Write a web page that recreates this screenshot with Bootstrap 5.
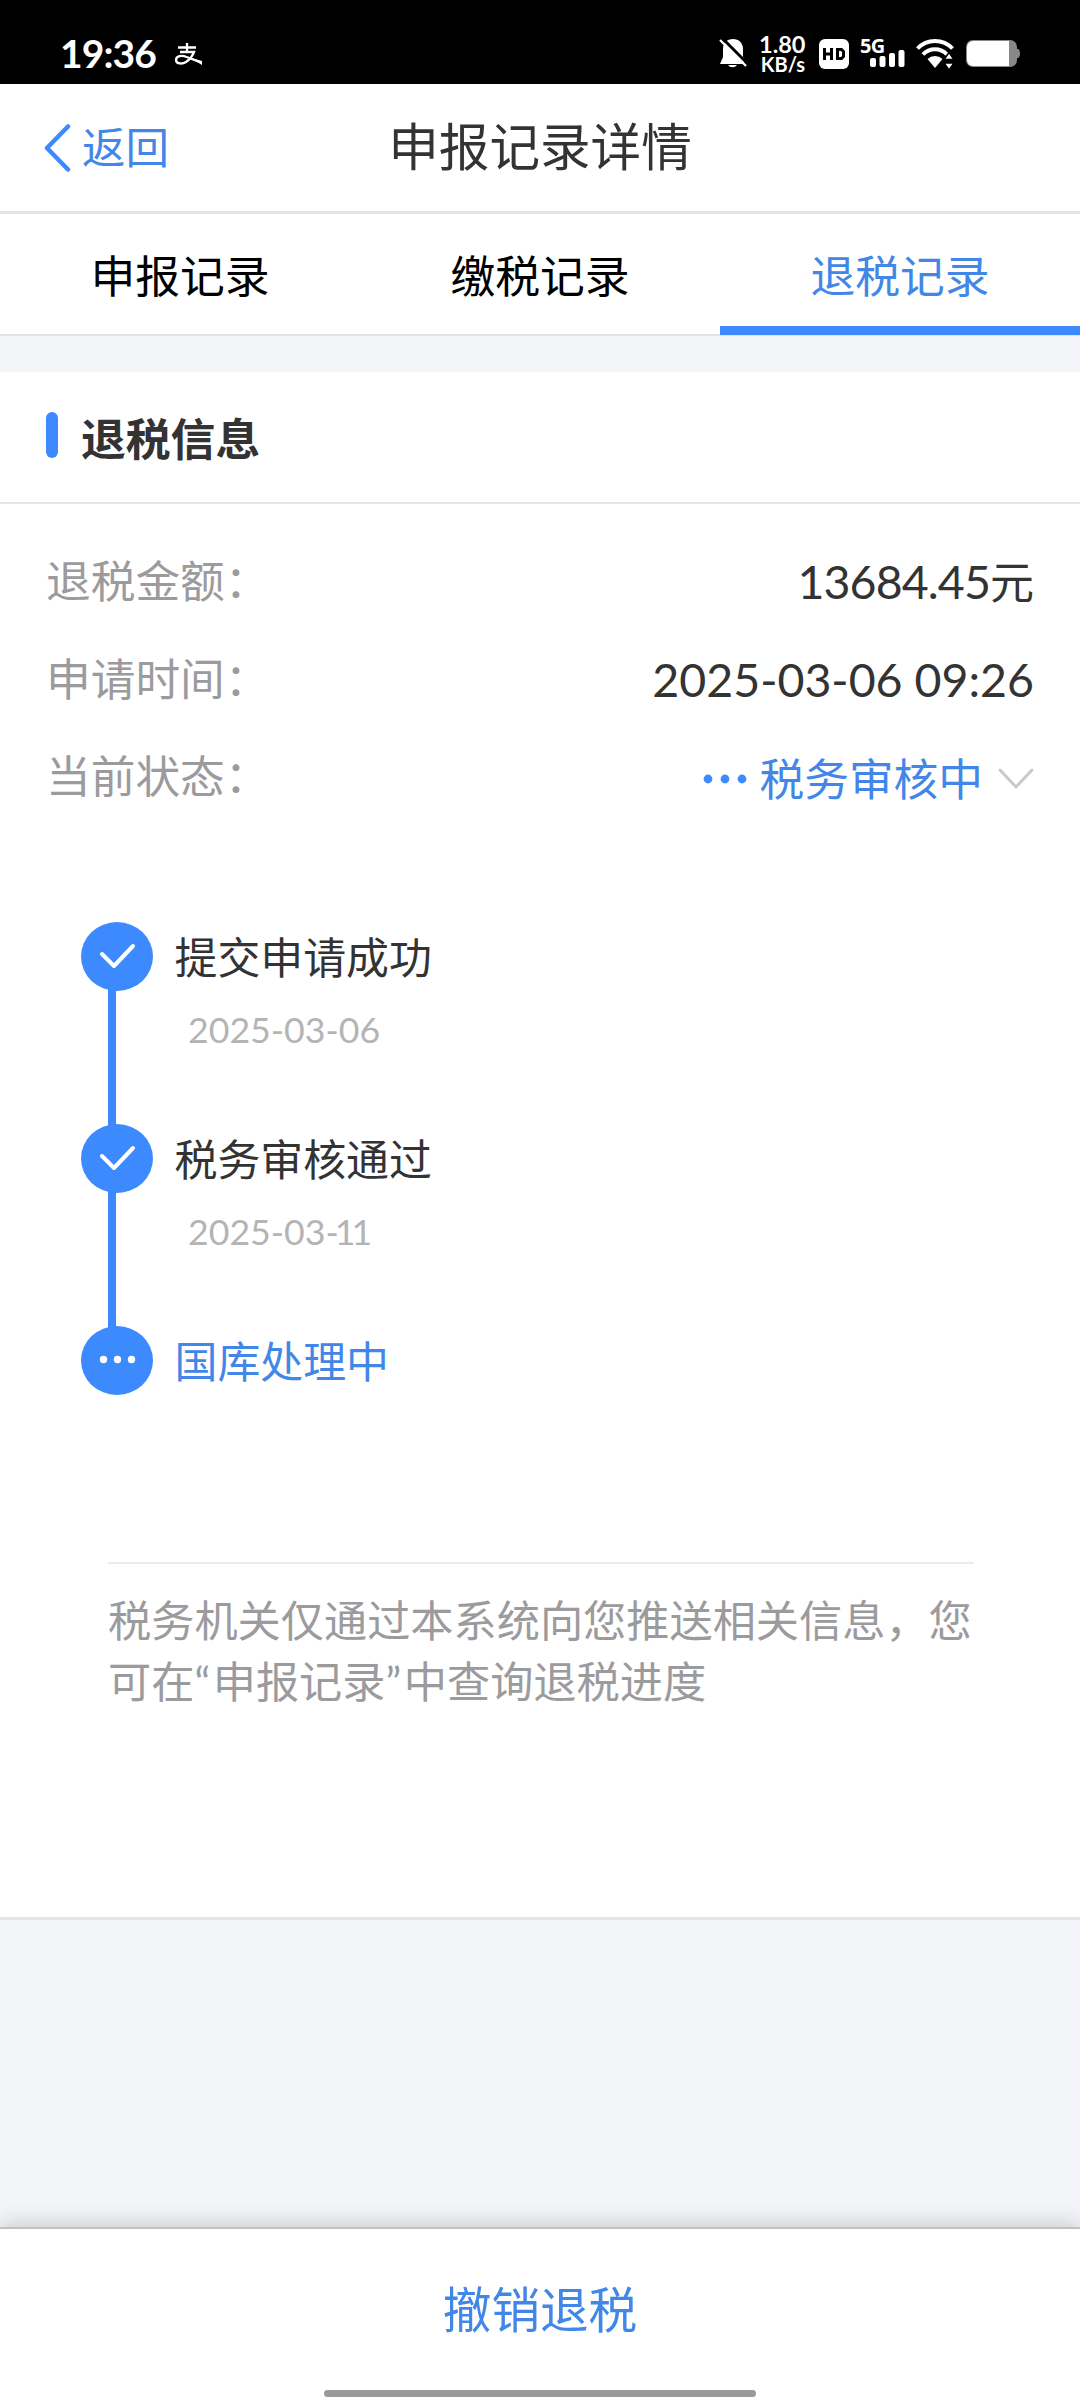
<!DOCTYPE html>
<html lang="zh-CN">
<head>
<meta charset="utf-8">
<meta name="viewport" content="width=device-width, initial-scale=1">
<title>申报记录详情</title>
<link href="https://cdn.jsdelivr.net/npm/bootstrap@5.3.0/dist/css/bootstrap.min.css" rel="stylesheet">
<style>
  :root { --brand: #3d8aff; --brand-text: #4287e8; --ink: #333; --muted: #9b9b9e; --canvas: #f3f5f9; }
  body { font-family: Lato, "Noto Sans CJK SC", sans-serif; background: var(--canvas); color: var(--ink); }
  svg { display: block; flex: none; }
  .screen { width: 1080px; height: 2400px; overflow: hidden; }
  .brand-ink { color: var(--brand-text); }

  .status-bar { height: 84px; background: #000; color: #fff; padding: 24px 60px 0 60px; }
  .status-bar > div { height: 60px; }
  .clock { font-size: 39px; line-height: 60px; font-weight: 700; width: 114px; letter-spacing: -.9px; margin-top: -2px; }
  .speed { width: 46px; margin: 0 14px 0 12px; text-align: right; font-weight: 700; white-space: nowrap; }
  .speed div:first-child { font-size: 23.5px; line-height: 21px; }
  .speed div:last-child { font-size: 20px; line-height: 19px; }
  .cell { width: 50px; height: 32px; margin-left: 8px; }
  .cell div { font: 700 20px/20px "Noto Sans", sans-serif; margin: -2px 0 0 3px; height: 14px; letter-spacing: -.8px; }

  .title-bar { height: 130px; border-bottom: 3px solid #e3e3e3; }
  .title-bar h1 { font-size: 50.6px; line-height: 60px; margin: 0 0 2px; }
  .side { width: 300px; padding-left: 44px; }
  .back { font-size: 43.5px; line-height: 60px; }
  .back span { margin: -1px 0 0 11px; }
  .tabs { height: 122px; border-bottom: 2px solid #e4e4e6; }
  .tabs .nav-link { font-size: 44.8px; line-height: 60px; padding: 32px 0 0; height: 121px; color: #000; border-bottom: 9px solid transparent; border-radius: 0; }
  .tabs .nav-link.active { color: var(--brand-text); border-bottom-color: var(--brand); }

  .panel { margin-top: 36px; height: 1548px; border-bottom: 3px solid #e3e4e5; }
  .panel-head { height: 132px; border-bottom: 2px solid #e6e6e7; padding: 37px 46px 0; }
  .panel-head h2 { font-size: 44.8px; line-height: 60px; margin: 0 0 0 23px; }
  .accent { width: 12px; height: 46px; border-radius: 6px; background: var(--brand); margin-top: 3px; }
  .facts { padding: 28px 46px 0; }
  .fact { height: 97.5px; line-height: 98px; font-size: 44.7px; }
  .fact dt { font-weight: 400; color: var(--muted); }
  .fact .num { font-size: 46.5px; }
  .fact .amount { letter-spacing: -.9px; }
  .fact .amount span { font-size: 44px; letter-spacing: 0; }
  .fact .state { padding-top: 6px; }
  .state span { margin: 0 15px 0 12px; }

  .steps { padding: 97px 0 0 81px; }
  .step { height: 202px; }
  .rail { width: 72px; }
  .disc { width: 72px; height: 69px; }
  .stem { width: 8px; height: 137px; margin: -2px 0 -2px 27px; background: var(--brand); }
  .step-text { margin-left: 21.5px; font-size: 42.9px; line-height: 60px; padding-top: 6px; }
  .step-date { margin: 12px 0 0 35px; font-size: 35.7px; line-height: 60px; color: #b4b4b4; }
  .step-date span { letter-spacing: -4px; }
  .note { margin: 34px 107px 0 108px; border-top: 2px solid #ececec; padding-top: 26px; font-size: 43.2px; line-height: 61px; color: var(--muted); width: 866px; }
  .note span { letter-spacing: 2.5px; }

  .action { height: 173px; border-top: 2px solid #bfc0c2; box-shadow: 0 -3px 22px rgba(0,0,0,.18); }
  .action a { font-size: 48.6px; line-height: 60px; margin-top: 50px; }
  .home-bar { width: 432px; height: 7px; border-radius: 4px; background: #999; margin-bottom: 3px; }
</style>
</head>
<body>
<div class="screen d-flex flex-column">
  <header class="status-bar d-flex justify-content-between flex-shrink-0">
    <div class="d-flex align-items-center">
      <div class="clock">19:36</div>
      <svg width="28" height="22" viewBox="0 0 28 22" fill="none" stroke="#fff" stroke-width="2.300"><path d="M4 4.500h18M13 0v9M6 9h14c-1.500 4-4.500 7.500-8 10-3 2-10 2.500-10-2 0-4 6-5 10-3.200L27 19.500"/><path d="M16 14.500l12 3.500v4z" fill="#fff" stroke="none"/></svg>
    </div>
    <div class="d-flex align-items-center">
      <svg width="28" height="32" viewBox="0 0 28 32"><path d="M14 1c-6 0-10 4-10 10v8L1 26h24v-6l-1-1v-8c0-6-4-10-10-10z" fill="#fff"/><path d="M9 27a5 4 0 0 0 9 0z" fill="#fff"/><path d="M4 1l25 25" stroke="#000" stroke-width="3"/><path d="M1 2l26 26" stroke="#fff" stroke-width="2.300"/></svg>
      <div class="speed"><div>1.80</div><div>KB/s</div></div>
      <svg width="30" height="30" viewBox="0 0 30 30"><rect width="30" height="30" rx="6" fill="#fff"/><path d="M5.500 9v12M12.500 9v12M5.500 15h7M17 10.500h5.500l2 2v5l-2 2H18.500V10" fill="none" stroke="#000" stroke-width="3"/></svg>
      <div class="cell">
        <div>5G</div>
        <svg width="50" height="18" viewBox="0 0 50 18" fill="#fff"><rect x="13" y="8" width="6" height="9" rx="2"/><rect x="22.500" y="6" width="6" height="11" rx="2"/><rect x="32" y="3" width="6" height="14" rx="2"/><rect x="41.500" y="0" width="6" height="17" rx="2"/></svg>
      </div>
      <svg class="ms-2" width="40" height="32" viewBox="0 0 40 32" fill="none" stroke="#fff" stroke-width="4"><path d="M2.500 10.500a24 24 0 0 1 35 0M8 16.500a16.500 16.500 0 0 1 24 0"/><path d="M12.500 21a11 11 0 0 1 15 0L20 30z" fill="#fff" stroke="none"/><path d="M34 14.500l5 7H29zM34 32l5-7H29z" fill="#fff" stroke="#000" stroke-width="1.500"/></svg>
      <svg style="margin-left:11px" width="54" height="28" viewBox="0 0 54 28"><rect width="51" height="27" rx="7" fill="#888"/><path d="M7 1h36v25H7a6 6 0 0 1-6-6V7a6 6 0 0 1 6-6z" fill="#fff"/><path d="M51 9h1.500q1.500 1.500 1.500 4.500t-1.500 4.500H51z" fill="#888"/></svg>
    </div>
  </header>

  <nav class="title-bar bg-white d-flex align-items-center justify-content-between flex-shrink-0">
    <a class="side back brand-ink text-decoration-none d-flex align-items-center" href="#">
      <svg width="27" height="50" viewBox="0 0 27 50" fill="none" stroke="#3d8aff" stroke-width="4.500" stroke-linecap="round" stroke-linejoin="round"><path d="M24 3.500L3 25l21 21.500"/></svg>
      <span>返回</span>
    </a>
    <h1 class="fw-normal">申报记录详情</h1>
    <div class="side"></div>
  </nav>

  <ul class="tabs nav nav-fill bg-white flex-shrink-0 flex-nowrap">
    <li class="nav-item col-4"><a class="nav-link" href="#">申报记录</a></li>
    <li class="nav-item col-4"><a class="nav-link" href="#">缴税记录</a></li>
    <li class="nav-item col-4"><a class="nav-link active" href="#">退税记录</a></li>
  </ul>

  <main class="panel bg-white flex-shrink-0">
    <div class="panel-head d-flex">
      <span class="accent"></span>
      <h2 class="fw-bold">退税信息</h2>
    </div>
    <dl class="facts m-0">
      <div class="fact d-flex justify-content-between"><dt>退税金额：</dt><dd class="num amount m-0">13684.45<span>元</span></dd></div>
      <div class="fact d-flex justify-content-between"><dt>申请时间：</dt><dd class="num m-0">2025-03-06 09:26</dd></div>
      <div class="fact d-flex justify-content-between"><dt>当前状态：</dt>
        <dd class="state m-0 d-flex align-items-center brand-ink">
          <svg width="46" height="12" viewBox="0 0 46 12" fill="#3d8aff"><circle cx="6" cy="6" r="4.400"/><circle cx="23" cy="6" r="4.400"/><circle cx="40" cy="6" r="4.400"/></svg>
          <span>税务审核中</span>
          <svg width="36" height="22" viewBox="0 0 36 22" fill="none" stroke="#c8c8c8" stroke-width="3" stroke-linecap="round" stroke-linejoin="round"><path d="M2 2l16 17L34 2"/></svg>
        </dd>
      </div>
    </dl>

    <div class="steps">
      <div class="step d-flex">
        <div class="rail"><svg class="disc" viewBox="0 0 72 69"><ellipse cx="36" cy="34.500" rx="36" ry="34.500" fill="#3d8aff"/><path d="M21 32l12 12 19-20" fill="none" stroke="#fff" stroke-width="4" stroke-linecap="round" stroke-linejoin="round"/></svg><div class="stem"></div></div>
        <div><div class="step-text">提交申请成功</div><div class="step-date">2025-03-06</div></div>
      </div>
      <div class="step d-flex">
        <div class="rail"><svg class="disc" viewBox="0 0 72 69"><ellipse cx="36" cy="34.500" rx="36" ry="34.500" fill="#3d8aff"/><path d="M21 32l12 12 19-20" fill="none" stroke="#fff" stroke-width="4" stroke-linecap="round" stroke-linejoin="round"/></svg><div class="stem"></div></div>
        <div><div class="step-text">税务审核通过</div><div class="step-date">2025-03<span>-11</span></div></div>
      </div>
      <div class="step d-flex">
        <div class="rail"><svg class="disc" viewBox="0 0 72 69"><ellipse cx="36" cy="34.500" rx="36" ry="34.500" fill="#3d8aff"/><g fill="#fff"><circle cx="22.500" cy="33.500" r="3.700"/><circle cx="36.500" cy="33.500" r="3.700"/><circle cx="50.500" cy="33.500" r="3.700"/></g></svg></div>
        <div><div class="step-text brand-ink">国库处理中</div></div>
      </div>
    </div>

    <p class="note mb-0">税务机关仅通过本系统向您推送相关信息，您可在<span>“</span>申报记录<span>”</span>中查询退税进度</p>
  </main>

  <footer class="action bg-white mt-auto d-flex flex-column align-items-center justify-content-between flex-shrink-0">
    <a class="brand-ink text-decoration-none" href="#">撤销退税</a>
    <div class="home-bar"></div>
  </footer>
</div>
<script src="https://cdn.jsdelivr.net/npm/bootstrap@5.3.0/dist/js/bootstrap.bundle.min.js"></script>
</body>
</html>
